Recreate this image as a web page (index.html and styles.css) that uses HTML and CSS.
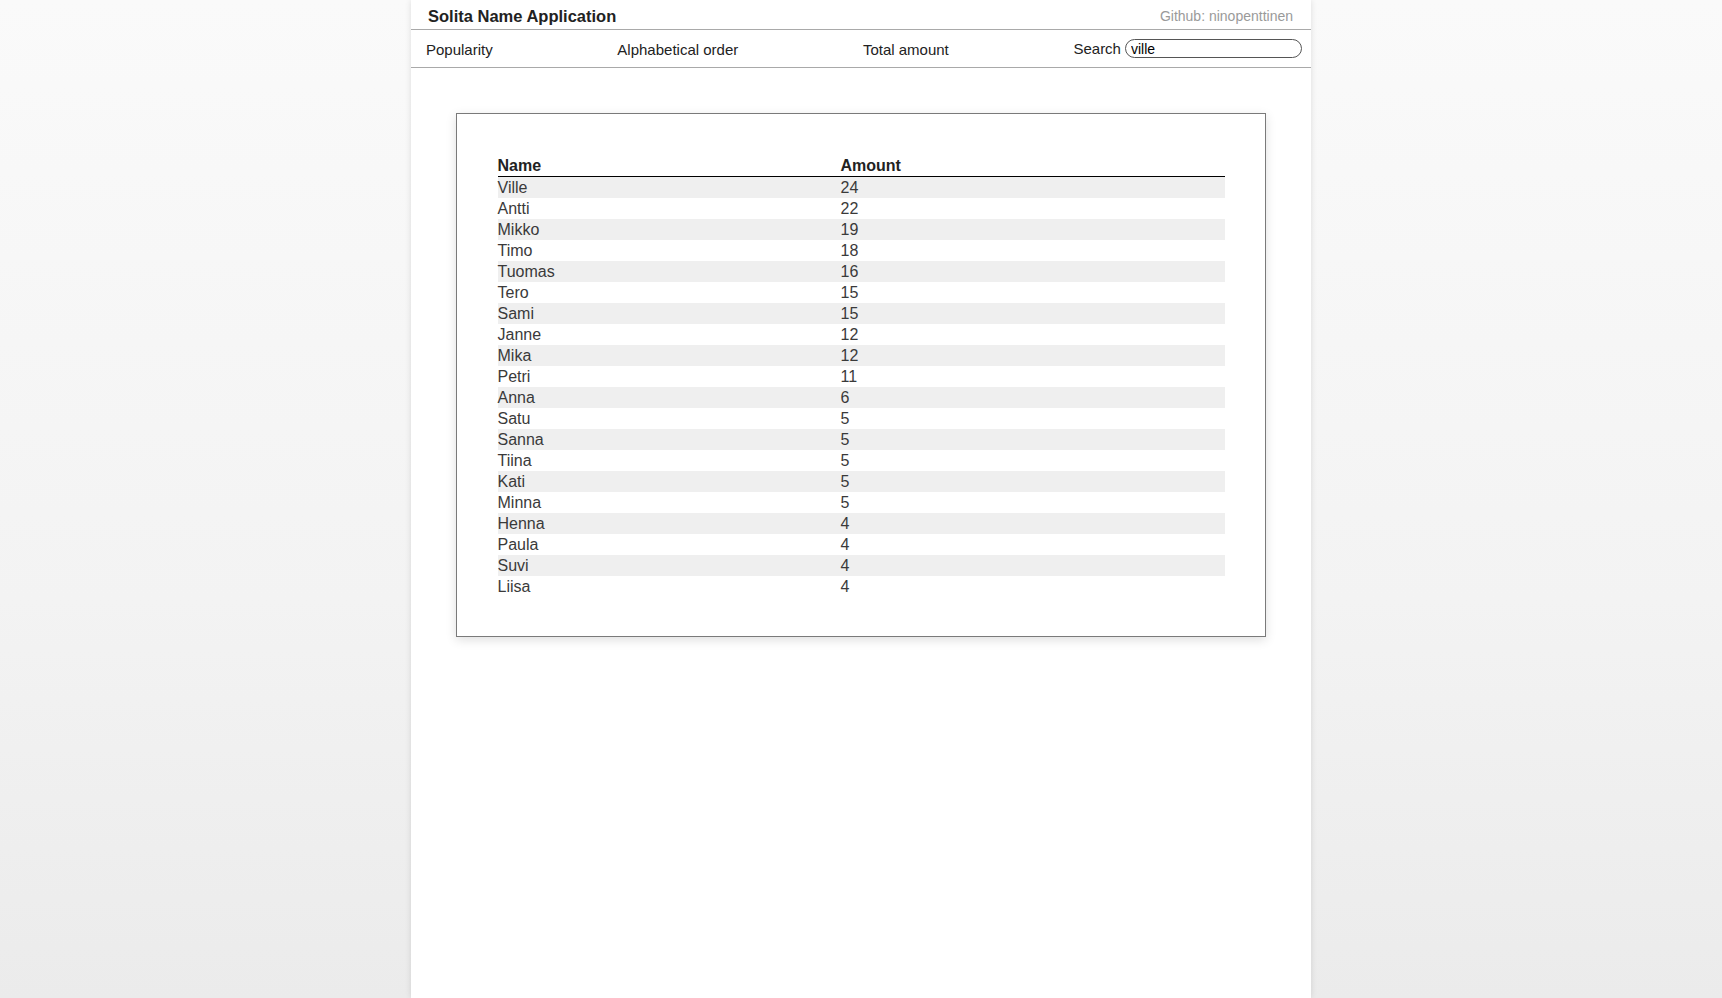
FILE: index.html
```html
<!DOCTYPE html>
<html lang="en">
<head>
<meta charset="utf-8">
<title>Solita Name Application</title>
<link rel="stylesheet" href="styles.css">
</head>
<body>
<div class="app">
  <header class="topbar">
    <h1 class="title">Solita Name Application</h1>
    <span class="github">Github: ninopenttinen</span>
  </header>
  <nav class="nav">
    <a class="nav-link">Popularity</a>
    <a class="nav-link">Alphabetical order</a>
    <a class="nav-link">Total amount</a>
    <label class="search">Search <input class="search-input" type="text" value="ville"></label>
  </nav>
  <main class="card">
    <table class="names">
      <thead>
        <tr><th class="col-name">Name</th><th>Amount</th></tr>
      </thead>
      <tbody>
        <tr><td>Ville</td><td>24</td></tr>
        <tr><td>Antti</td><td>22</td></tr>
        <tr><td>Mikko</td><td>19</td></tr>
        <tr><td>Timo</td><td>18</td></tr>
        <tr><td>Tuomas</td><td>16</td></tr>
        <tr><td>Tero</td><td>15</td></tr>
        <tr><td>Sami</td><td>15</td></tr>
        <tr><td>Janne</td><td>12</td></tr>
        <tr><td>Mika</td><td>12</td></tr>
        <tr><td>Petri</td><td>11</td></tr>
        <tr><td>Anna</td><td>6</td></tr>
        <tr><td>Satu</td><td>5</td></tr>
        <tr><td>Sanna</td><td>5</td></tr>
        <tr><td>Tiina</td><td>5</td></tr>
        <tr><td>Kati</td><td>5</td></tr>
        <tr><td>Minna</td><td>5</td></tr>
        <tr><td>Henna</td><td>4</td></tr>
        <tr><td>Paula</td><td>4</td></tr>
        <tr><td>Suvi</td><td>4</td></tr>
        <tr><td>Liisa</td><td>4</td></tr>
      </tbody>
    </table>
  </main>
</div>
</body>
</html>
```

FILE: styles.css
```css
html, body {
  margin: 0;
  padding: 0;
  height: 100%;
}

body {
  font-family: "Liberation Sans", Arial, Helvetica, sans-serif;
  color: #222;
  background: linear-gradient(to bottom, #fafafa 0%, #f3f3f3 60%, #ebebeb 100%);
  overflow: hidden;
}

.app {
  width: 900px;
  min-height: 100%;
  margin: 0 auto;
  background: #ffffff;
  box-shadow: 0 0 6px rgba(0, 0, 0, 0.12);
  display: flex;
  flex-direction: column;
}

.topbar {
  height: 29px;
  display: flex;
  align-items: flex-start;
  justify-content: space-between;
  padding: 0 18px 0 17px;
  border-bottom: 1px solid #a9a9a9;
}

.title {
  margin: 0;
  font-size: 16.5px;
  font-weight: bold;
  line-height: 18px;
  padding-top: 7px;
  color: #222;
}

.github {
  font-size: 14px;
  line-height: 16px;
  padding-top: 8px;
  color: #9a9a9a;
}

.nav {
  height: 37px;
  display: flex;
  align-items: center;
  justify-content: space-between;
  padding: 0 9px 0 15px;
  border-bottom: 1px solid #a9a9a9;
  font-size: 15px;
}

.nav-link {
  color: #222;
  cursor: pointer;
  padding-top: 1px;
}

.search {
  display: flex;
  align-items: center;
  gap: 4px;
  color: #222;
}

.search-input {
  width: 177px;
  height: 19px;
  box-sizing: border-box;
  border: 1px solid #555;
  border-radius: 10px;
  padding: 0 5px;
  font-family: "Liberation Sans", Arial, sans-serif;
  font-size: 14px;
  color: #000;
  outline: none;
  background: #fff;
}

.card {
  width: 810px;
  box-sizing: border-box;
  margin: 45px auto 0;
  padding: 41px 0 39px;
  border: 1px solid #7a7a7a;
  background: #fff;
  box-shadow: 0 3px 10px rgba(0, 0, 0, 0.13);
}

.names {
  width: 727px;
  margin: 0 auto;
  border-collapse: collapse;
  font-size: 16px;
  line-height: 19px;
}

.names th {
  text-align: left;
  font-weight: bold;
  color: #222;
  padding: 1px 0;
  border-bottom: 1px solid #000;
}

.names .col-name {
  width: 343px;
}

.names td {
  padding: 1px 0;
  color: #3a3a3a;
}

.names tbody tr:nth-child(odd) {
  background: #efefef;
}
```
